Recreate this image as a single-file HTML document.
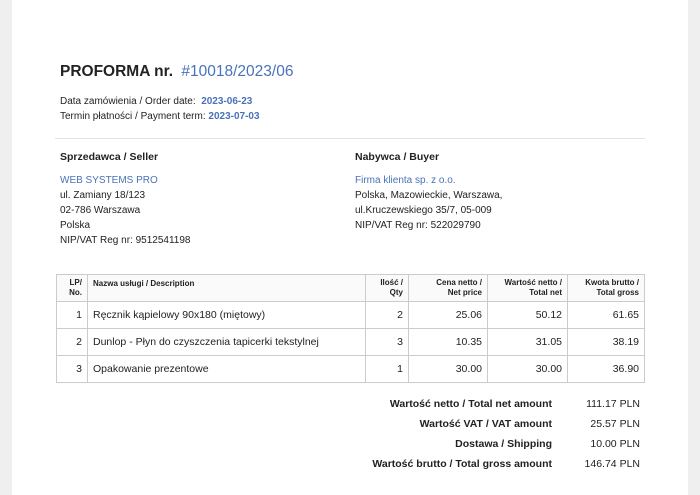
<!DOCTYPE html>
<html><head><meta charset="utf-8"><style>
body{margin:0;width:700px;height:495px;background:#efefef;font-family:"Liberation Sans",sans-serif;color:#222;overflow:hidden;position:relative}
.page{position:absolute;left:12px;top:0;width:676px;height:495px;background:#fff}
.a{position:absolute;white-space:nowrap}
.blue{color:#4a72b8}
.s{font-size:10px;line-height:15px}
table{position:absolute;left:56px;top:274px;border-collapse:collapse;font-size:10.5px}
td,th{border:1px solid #ccc;padding:0 5px}
th{font-size:8px;font-weight:bold;height:26px;text-align:right;background:#fafafa;line-height:10px;vertical-align:middle}
td{height:26px;text-align:right}
.tot{position:absolute;font-size:10.5px;white-space:nowrap}
</style></head><body>
<div class="page"></div>
<div class="a" style="left:60px;top:63px;font-size:15.5px;font-weight:bold">PROFORMA nr. <span class="blue" style="font-weight:normal;margin-left:4px">#10018/2023/06</span></div>
<div class="a s" style="left:60px;top:94px">Data zamówienia / Order date:&nbsp; <b class="blue">2023-06-23</b><br>Termin płatności / Payment term: <b class="blue">2023-07-03</b></div>
<div class="a" style="left:55px;top:138px;width:590px;border-top:1px solid #e3e3e3"></div>
<div class="a s" style="left:60px;top:150px;font-weight:bold;font-size:10.5px">Sprzedawca / Seller</div>
<div class="a s" style="left:60px;top:173px"><span class="blue">WEB SYSTEMS PRO</span><br>ul. Zamiany 18/123<br>02-786 Warszawa<br>Polska<br>NIP/VAT Reg nr: 9512541198</div>
<div class="a s" style="left:355px;top:150px;font-weight:bold;font-size:10.5px">Nabywca / Buyer</div>
<div class="a s" style="left:355px;top:173px"><span class="blue">Firma klienta sp. z o.o.</span><br>Polska, Mazowieckie, Warszawa,<br>ul.Kruczewskiego 35/7, 05-009<br>NIP/VAT Reg nr: 522029790</div>
<table>
<tr><th style="width:20px">LP/<br>No.</th><th style="width:267px;text-align:left;vertical-align:top;padding-top:4px;height:22px">Nazwa usługi / Description</th><th style="width:32px">Ilość /<br>Qty</th><th style="width:68px">Cena netto /<br>Net price</th><th style="width:69px">Wartość netto /<br>Total net</th><th style="width:66px">Kwota brutto /<br>Total gross</th></tr>
<tr><td>1</td><td style="text-align:left">Ręcznik kąpielowy 90x180 (miętowy)</td><td>2</td><td>25.06</td><td>50.12</td><td>61.65</td></tr>
<tr><td>2</td><td style="text-align:left">Dunlop - Płyn do czyszczenia tapicerki tekstylnej</td><td>3</td><td>10.35</td><td>31.05</td><td>38.19</td></tr>
<tr><td>3</td><td style="text-align:left">Opakowanie prezentowe</td><td>1</td><td>30.00</td><td>30.00</td><td>36.90</td></tr>
</table>
<div class="tot" style="right:148px;top:394px;font-weight:bold;text-align:right;line-height:20px">Wartość netto / Total net amount<br>Wartość VAT / VAT amount<br>Dostawa / Shipping<br>Wartość brutto / Total gross amount</div>
<div class="tot" style="right:60px;top:394px;text-align:right;line-height:20px">111.17 PLN<br>25.57 PLN<br>10.00 PLN<br>146.74 PLN</div>
</body></html>
